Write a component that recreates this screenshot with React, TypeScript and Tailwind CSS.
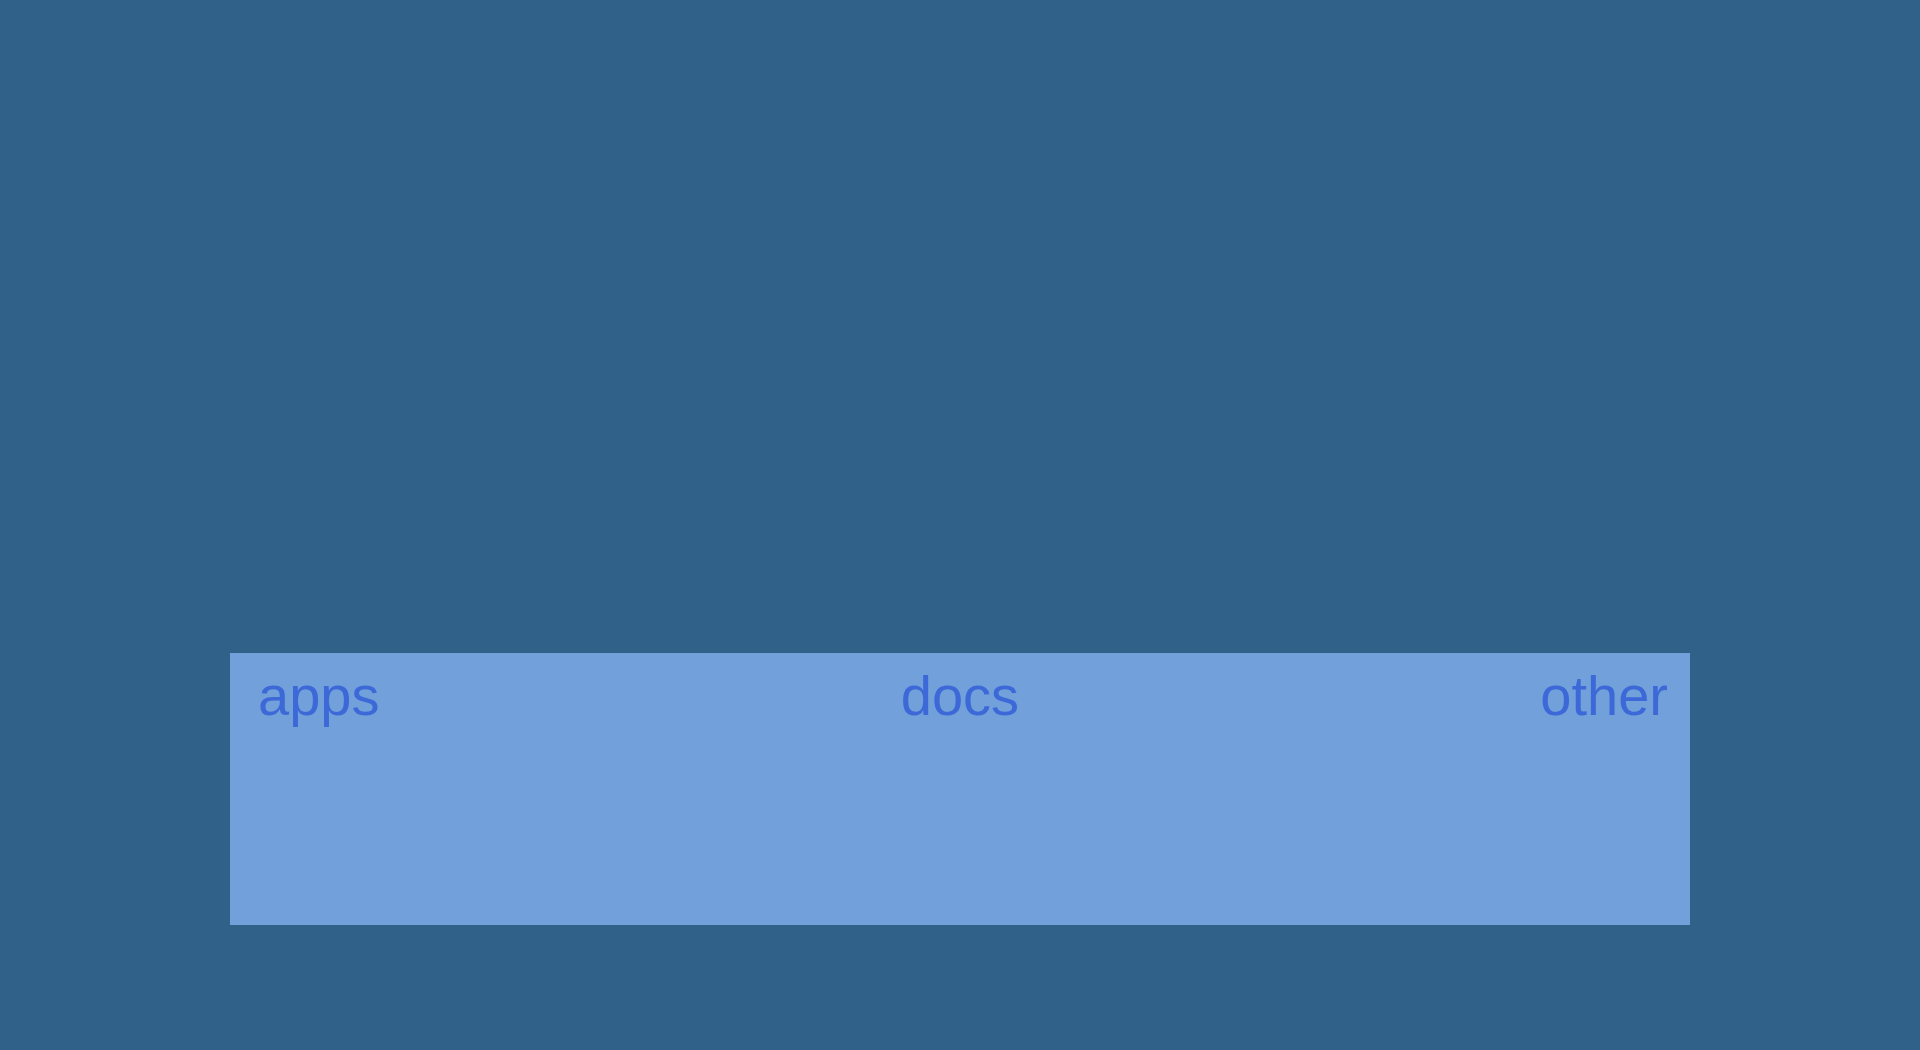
export default function App() {
  return (
    <div className="min-h-screen w-full bg-[#2f6189] flex flex-col items-center pt-[653px]">
      {/* Link panel */}
      <div className="w-[1460px] h-[272px] bg-[#71a0da] pl-[28px] pr-[22px] flex justify-between items-start">
        <span className="text-[56px] leading-[86px] text-[#3d68d8] font-['Liberation_Sans',Arial,sans-serif]">apps</span>
        <span className="text-[56px] leading-[86px] text-[#3d68d8] font-['Liberation_Sans',Arial,sans-serif]">docs</span>
        <span className="text-[56px] leading-[86px] text-[#3d68d8] font-['Liberation_Sans',Arial,sans-serif]">other</span>
      </div>
    </div>
  );
}
